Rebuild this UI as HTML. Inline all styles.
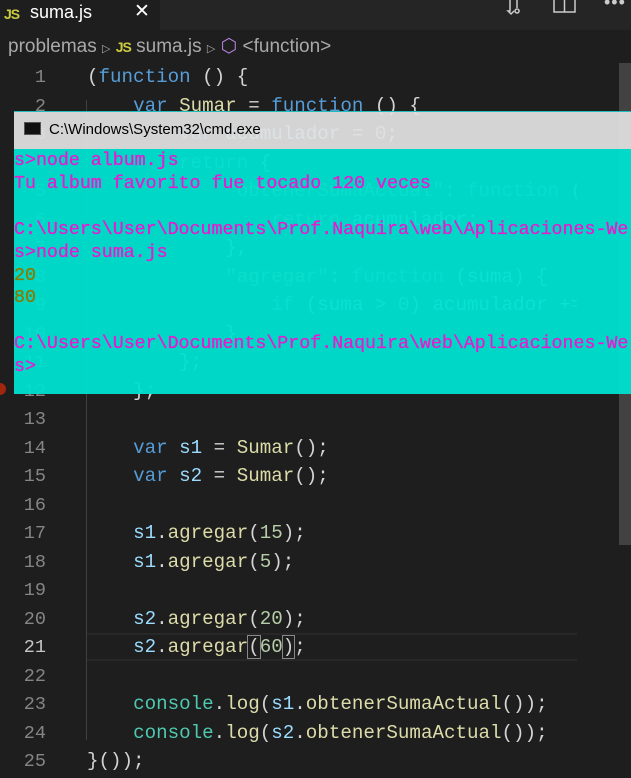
<!DOCTYPE html>
<html><head><meta charset="utf-8"><style>
*{margin:0;padding:0;box-sizing:border-box}
body{width:631px;height:778px;overflow:hidden;background:#1e1e1e;position:relative;font-family:"Liberation Sans",sans-serif}
.tabbar{position:absolute;left:0;top:0;width:631px;height:30px;background:#252526}
.tab{position:absolute;left:0;top:0;width:160px;height:30px;background:#1e1e1e;color:#fff;font-size:18px}
.js{color:#cbcb41;font-weight:bold;font-size:14px;letter-spacing:-1px}
.bc{position:absolute;left:8px;top:35px;color:#a9a9a9;font-size:19px;white-space:nowrap}
.code{position:absolute;left:0;top:63px;font-family:"Liberation Mono",monospace;font-size:19.2px;color:#d4d4d4}
.ln{position:absolute;width:46px;text-align:right;color:#858585;font-size:18.5px;line-height:28.5px;height:28.5px;margin-top:1px}
.l{position:absolute;left:87px;white-space:pre;height:28.5px;line-height:28.5px}
.k{color:#569cd6}.v{color:#9cdcfe}.f{color:#dcdcaa}.n{color:#b5cea8}.s{color:#ce9178}.c{color:#4ec9b0}
.guide{position:absolute;left:86px;top:100px;width:1px;height:640px;background:#404040}
.mini{position:absolute;left:577px;top:63px;width:42px;height:715px;background:#1e1e1e}
.sb{position:absolute;left:619px;top:63px;width:12px;height:482px;background:#424242}
.cmd{position:absolute;left:14px;top:111px;width:617px;height:283px;border-top:1px solid #2bb;}
.title{height:37px;background:rgba(226,226,226,0.93);font-size:15px;color:#000;padding:9px 0 0 35px;position:relative}
.body{height:245px;background:rgba(0,226,208,0.95);font-family:"Liberation Mono",monospace;font-size:18.3px;color:#e81ad0;line-height:22.9px;padding-top:1px;white-space:pre;overflow:hidden;-webkit-text-stroke:0.3px #e81ad0}
.y{color:#8a7a00;-webkit-text-stroke:0.3px #8a7a00}
</style></head><body>
<div class="tabbar"><div class="tab"><span class="js" style="position:absolute;left:4px;top:6px">JS</span><span style="position:absolute;left:30px;top:2px">suma.js</span><span style="position:absolute;left:134px;top:0px;font-size:19px">✕</span></div>
<svg style="position:absolute;left:505px;top:0" width="22" height="18"><path d="M5 0v11h-2l3 3 3-3M12 0v8M12 9a2 2 0 1 0 .1 0" stroke="#ccc" stroke-width="1.5" fill="none"/></svg>
<svg style="position:absolute;left:553px;top:0" width="24" height="14"><rect x="1" y="-2" width="21" height="14" stroke="#ccc" stroke-width="1.5" fill="none"/><path d="M11.5 0v12" stroke="#ccc" stroke-width="1.5"/></svg>
<div style="position:absolute;left:604px;top:-8px;color:#ccc;font-size:18px;letter-spacing:1px">•••</div>
</div>
<div class="bc">problemas <span style="font-size:11px">▷</span> <span class="js">JS</span> suma.js <span style="font-size:11px">▷</span> <span style="color:#b180d7">⬡</span> &lt;function&gt;</div>
<div class="guide"></div>
<div class="code">
<div class="ln" style="top:0">1</div><div class="l" style="top:0"><span>(</span><span class="k">function</span> () {</div>
<div class="ln" style="top:28.5px">2</div><div class="l" style="top:28.5px">    <span class="k">var</span> <span class="f">Sumar</span> = <span class="k">function</span> () {</div>
<div class="ln" style="top:57px">3</div><div class="l" style="top:57px">        <span class="k">var</span> <span class="v">acumulador</span> = <span class="n">0</span>;</div>
<div class="ln" style="top:85.5px">4</div><div class="l" style="top:85.5px">        <span style="color:#c586c0">return</span> {</div>
<div class="ln" style="top:114px">5</div><div class="l" style="top:114px">            <span class="s">"obtenerSumaActual"</span>: <span class="k">function</span> (</div>
<div class="ln" style="top:142.5px">6</div><div class="l" style="top:142.5px">                <span style="color:#c586c0">return</span> <span class="v">acumulador</span>;</div>
<div class="ln" style="top:171px">7</div><div class="l" style="top:171px">            },</div>
<div class="ln" style="top:199.5px">8</div><div class="l" style="top:199.5px">            <span class="s">"agregar"</span>: <span class="k">function</span> (<span class="v">suma</span>) {</div>
<div class="ln" style="top:228px">9</div><div class="l" style="top:228px">                <span style="color:#c586c0">if</span> (<span class="v">suma</span> &gt; <span class="n">0</span>) <span class="v">acumulador</span> +=</div>
<div class="ln" style="top:256.5px">10</div><div class="l" style="top:256.5px">            }</div>
<div class="ln" style="top:285px">11</div><div class="l" style="top:285px">        };</div>
<div class="ln" style="top:313.5px">12</div><div class="l" style="top:313.5px">    };</div>
<div class="ln" style="top:342px">13</div>
<div class="ln" style="top:370.5px">14</div><div class="l" style="top:370.5px">    <span class="k">var</span> <span class="v">s1</span> = <span class="f">Sumar</span>();</div>
<div class="ln" style="top:399px">15</div><div class="l" style="top:399px">    <span class="k">var</span> <span class="v">s2</span> = <span class="f">Sumar</span>();</div>
<div class="ln" style="top:427.5px">16</div>
<div class="ln" style="top:456px">17</div><div class="l" style="top:456px">    <span class="v">s1</span>.<span class="f">agregar</span>(<span class="n">15</span>);</div>
<div class="ln" style="top:484.5px">18</div><div class="l" style="top:484.5px">    <span class="v">s1</span>.<span class="f">agregar</span>(<span class="n">5</span>);</div>
<div class="ln" style="top:513px">19</div>
<div class="ln" style="top:541.5px">20</div><div class="l" style="top:541.5px">    <span class="v">s2</span>.<span class="f">agregar</span>(<span class="n">20</span>);</div>
<div style="position:absolute;left:87px;top:570px;width:490px;height:28px;border-top:2px solid #282828;border-bottom:2px solid #282828"></div>
<div class="ln" style="top:570px;color:#c6c6c6">21</div><div class="l" style="top:570px">    <span class="v">s2</span>.<span class="f">agregar</span><span style="outline:1px solid #888">(</span><span class="n">60</span><span style="outline:1px solid #888">)</span>;</div>
<div class="ln" style="top:598.5px">22</div>
<div class="ln" style="top:627px">23</div><div class="l" style="top:627px">    <span class="c">console</span>.<span class="f">log</span>(<span class="v">s1</span>.<span class="f">obtenerSumaActual</span>());</div>
<div class="ln" style="top:655.5px">24</div><div class="l" style="top:655.5px">    <span class="c">console</span>.<span class="f">log</span>(<span class="v">s2</span>.<span class="f">obtenerSumaActual</span>());</div>
<div class="ln" style="top:684px">25</div><div class="l" style="top:684px">}());</div>
</div>
<div class="mini"></div>
<div class="sb"></div>
<div style="position:absolute;left:-6px;top:383px;width:12px;height:12px;border-radius:6px;background:#a1260d"></div>
<div class="cmd">
<div class="title"><span style="position:absolute;left:10px;top:10px;width:17px;height:13px;background:#111;border:1px solid #555"></span>C:\Windows\System32\cmd.exe</div>
<div class="body">s&gt;node album.js
Tu album favorito fue tocado 120 veces

C:\Users\User\Documents\Prof.Naquira\web\Aplicaciones-We
s&gt;node suma.js
<span class="y">20</span>
<span class="y">80</span>

C:\Users\User\Documents\Prof.Naquira\web\Aplicaciones-We
s&gt;</div>
</div>
</body></html>
